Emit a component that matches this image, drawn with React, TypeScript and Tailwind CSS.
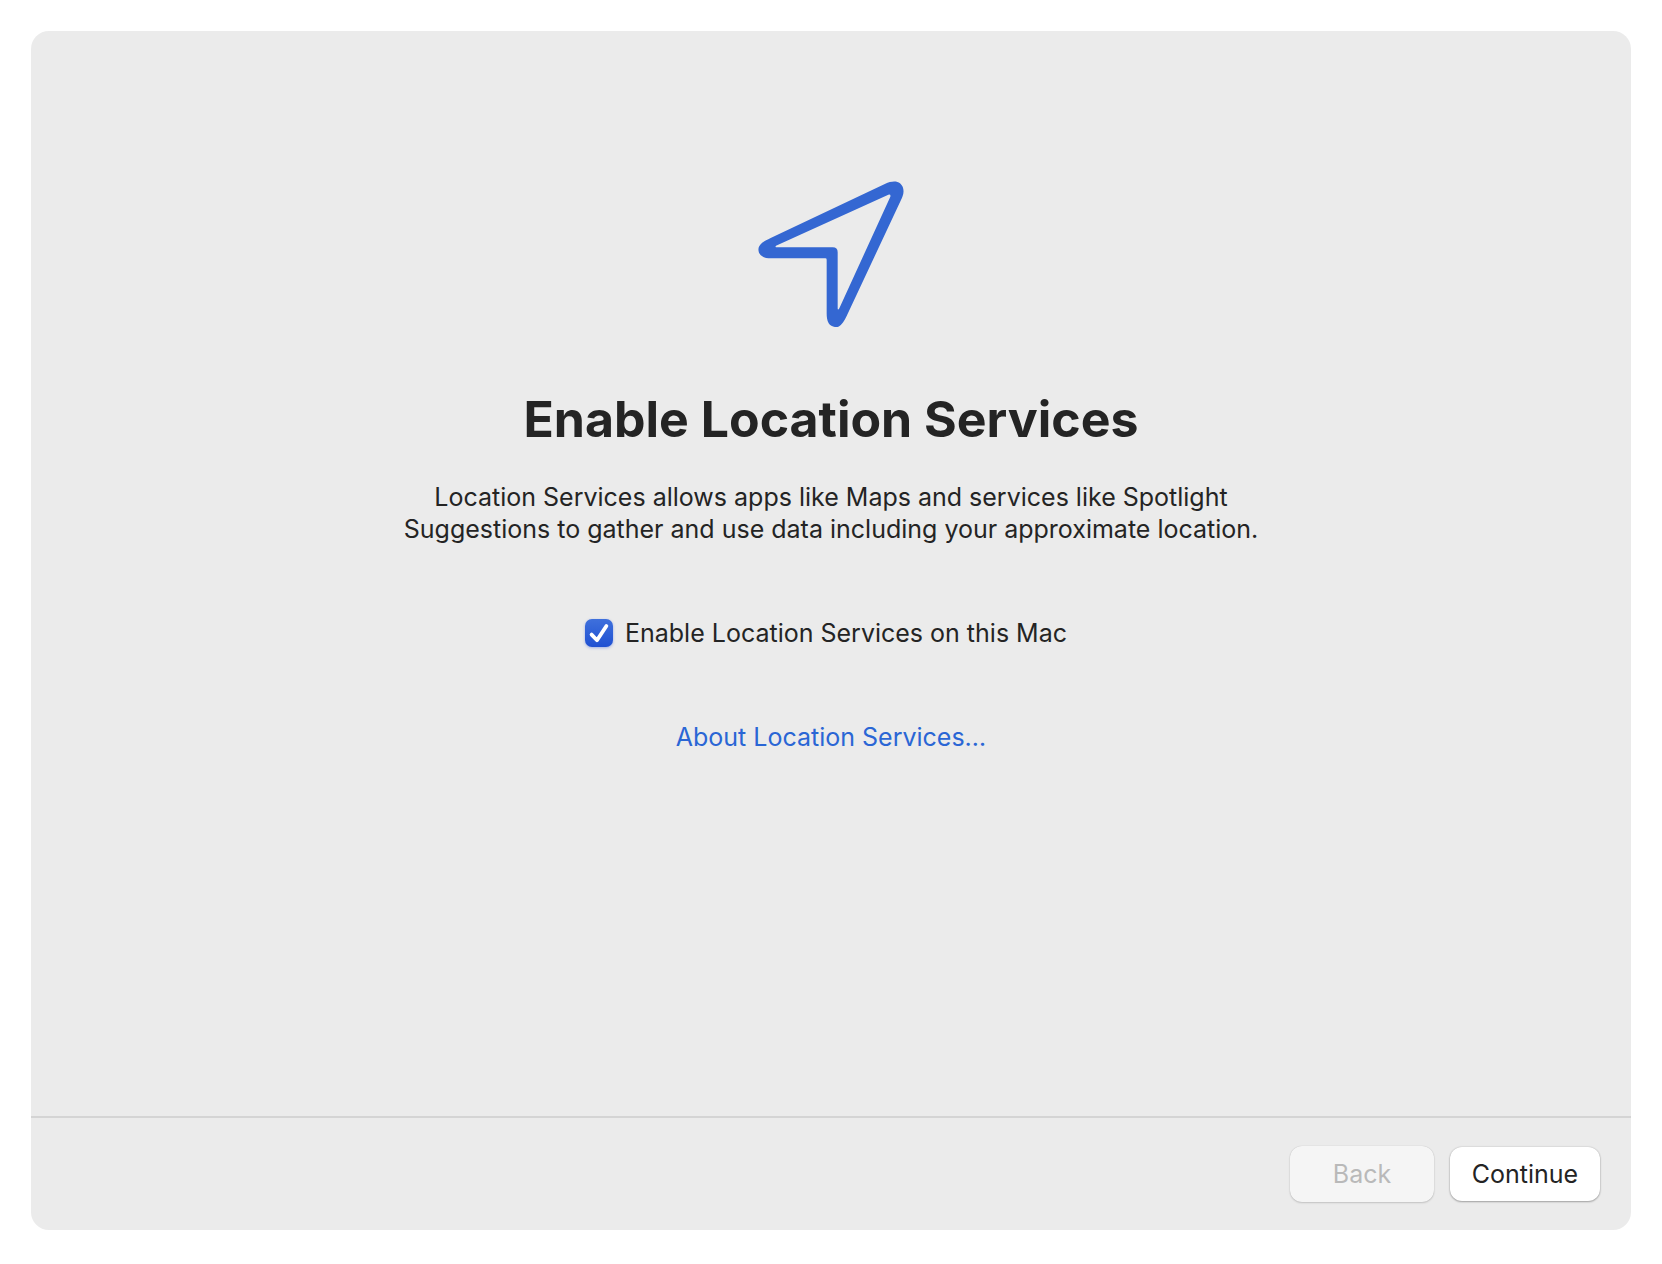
import { useState } from "react";

function LocationArrow() {
  return (
    <svg
      className="size-[146px] text-[#3467d2]"
      viewBox="52 47 438 438"
      fill="currentColor"
      fillRule="evenodd"
      aria-hidden="true"
    >
      <path d="M90 218 L434 55 C450 48 468 46 478 54 C489 63 491 78 486 92 Q484 98 481 104 L318 452 C311 466 304 479 293 484 C283 487 270 484 264 474 C259 465 258 455 258 444 L258 283 Q258 279 254 279 L92 279 C74 279 60 274 55 262 C51 251 54 242 63 234 C71 227 80 223 90 218 Z M106 241 Q102 246 109 246 L276 246 Q291 246 291 261 L291 428 Q291 437 296 429 L449 94 Q451 86 443 88 Z" />
    </svg>
  );
}

export default function App() {
  const [enabled, setEnabled] = useState(true);

  return (
    <div className="flex min-h-screen bg-white p-[31px] pb-[34px] font-['Inter',sans-serif] text-[25px] leading-8 text-[#242424]">
      <div className="flex flex-1 flex-col rounded-[18px] bg-[#ebebeb]">
        <main className="flex flex-1 flex-col items-center px-8 pt-[150px] text-center">
          <LocationArrow />
          <h1 className="mt-[60px] text-[50px] leading-[64px] font-bold">Enable Location Services</h1>
          <p className="mt-[30px] max-w-[900px]">
            Location Services allows apps like Maps and services like Spotlight{" "}
            <br className="hidden lg:inline" />
            Suggestions to gather and use data including your approximate location.
          </p>
          <label className="mt-[72px] flex items-center gap-3 pr-[10px]">
            <span className="grid size-7 shrink-0">
              <input
                type="checkbox"
                checked={enabled}
                onChange={(e) => setEnabled(e.target.checked)}
                className="peer col-start-1 row-start-1 size-7 appearance-none rounded-[7px] bg-white shadow-sm checked:bg-linear-to-b checked:from-[#3f70dc] checked:to-[#1f50d2] checked:shadow-[0_1px_3px_rgba(50,90,220,0.4)]"
              />
              <svg
                className="pointer-events-none invisible col-start-1 row-start-1 size-7 peer-checked:visible"
                viewBox="0 0 28 28"
                fill="none"
                stroke="white"
                strokeWidth="3.8"
                strokeLinecap="round"
                strokeLinejoin="round"
                aria-hidden="true"
              >
                <path d="M6.6 15.6 L12 21.2 L21.4 7" />
              </svg>
            </span>
            Enable Location Services on this Mac
          </label>
          <a href="#about" className="mt-[72px] text-[#2a66d5]">
            About Location Services…
          </a>
        </main>
        <footer className="flex items-center justify-end gap-4 border-t-2 border-[#d4d4d4] px-[31px] py-7">
          <button
            type="button"
            disabled
            className="h-14 w-36 rounded-xl bg-[#f5f5f5] text-[#b9b9b9] shadow-[0_0_1px_rgba(0,0,0,0.2),0_1px_2px_rgba(0,0,0,0.16)]"
          >
            Back
          </button>
          <button
            type="button"
            className="h-[54px] w-[150px] rounded-xl bg-white shadow-[0_0_2px_rgba(0,0,0,0.2),0_1px_2px_rgba(0,0,0,0.28)]"
          >
            Continue
          </button>
        </footer>
      </div>
    </div>
  );
}
